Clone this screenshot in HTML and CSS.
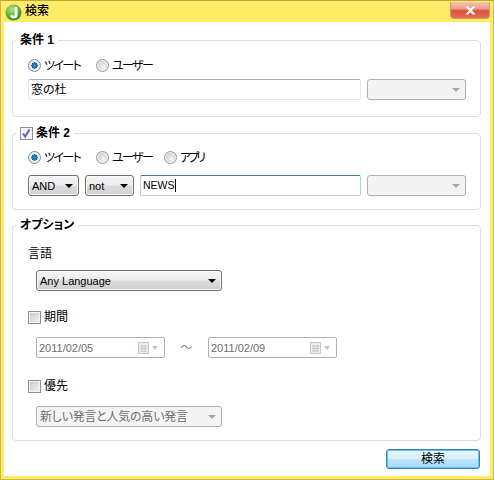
FILE: index.html
```html
<!DOCTYPE html>
<html lang="ja">
<head>
<meta charset="utf-8">
<title>検索</title>
<link rel="stylesheet" href="styles.css">
</head>
<body>
<div class="window">
  <div class="titlebar">
    <svg class="app-icon" width="17" height="17" viewBox="0 0 17 17">
      <defs><radialGradient id="g" cx="40%" cy="30%" r="75%"><stop offset="0" stop-color="#b5e08a"/><stop offset="0.6" stop-color="#5fae3c"/><stop offset="1" stop-color="#2f7d25"/></radialGradient></defs>
      <circle cx="8.5" cy="8.5" r="8" fill="url(#g)"/>
      <path d="M9.5 3h3v8.5c0 2-1.500 3-3.500 3c-2 0-3.500-1-4-2.500l2.200-1.200c.3.700 .8 1 1.300 1c.6 0 1-.4 1-1z" fill="#f4f8ec"/>
    </svg>
    <span class="title">検索</span>
    <div class="close">
      <svg width="13" height="11" viewBox="0 0 13 11"><path d="M1.500 1.500h2.600l2.400 2.200l2.400-2.200h2.600l-3.500 4l3.500 4h-2.600l-2.400-2.200l-2.400 2.200h-2.600l3.500-4z" fill="#fff"/></svg>
    </div>
  </div>
  <div class="content">
    <fieldset class="group first">
      <legend class="legend">条件 1</legend>
      <div class="radios r1">
        <span class="radio on"></span><span class="radio-label">ツイート</span>
        <span class="radio"></span><span class="radio-label">ユーザー</span>
      </div>
      <div class="row r2">
        <div class="input wide">窓の杜</div>
        <div class="select off combo"><span></span><i class="arrow"></i></div>
      </div>
    </fieldset>
    <fieldset class="group second">
      <legend class="legend">
        <span class="check on">
          <svg width="11" height="11" viewBox="0 0 11 11"><path d="M2 5.500l2.200 3l4.300-7" fill="none" stroke="#5566b8" stroke-width="2"/></svg>
        </span>条件 2
      </legend>
      <div class="radios">
        <span class="radio on"></span><span class="radio-label">ツイート</span>
        <span class="radio"></span><span class="radio-label">ユーザー</span>
        <span class="radio"></span><span class="radio-label app">アプリ</span>
      </div>
      <div class="row r3">
        <div class="select and"><span>AND</span><i class="arrow"></i></div>
        <div class="select not"><span>not</span><i class="arrow"></i></div>
        <div class="input focus"><span class="caret">NEWS</span></div>
        <div class="select off combo"><span></span><i class="arrow"></i></div>
      </div>
    </fieldset>
    <fieldset class="group third">
      <legend class="legend">オプション</legend>
      <div class="plain lang-label">言語</div>
      <div class="select indent lang"><span>Any Language</span><i class="arrow"></i></div>
      <div class="check-row period"><span class="check"></span>期間</div>
      <div class="dates">
        <div class="date"><span>2011/02/05</span>
          <svg class="cal" width="11" height="12" viewBox="0 0 11 12"><rect x="0.500" y="0.500" width="10" height="11" fill="#eceff2" stroke="#c4c8cc"/><path d="M2 4h7M2 6.500h7M2 9h7M4 3v7M7 3v7" stroke="#c5cacf"/></svg>
          <i class="arrow"></i></div>
        <span class="tilde">～</span>
        <div class="date"><span>2011/02/09</span>
          <svg class="cal" width="11" height="12" viewBox="0 0 11 12"><rect x="0.500" y="0.500" width="10" height="11" fill="#eceff2" stroke="#c4c8cc"/><path d="M2 4h7M2 6.500h7M2 9h7M4 3v7M7 3v7" stroke="#c5cacf"/></svg>
          <i class="arrow"></i></div>
      </div>
      <div class="check-row priority"><span class="check"></span>優先</div>
      <div class="select off indent lang pri"><span>新しい発言と人気の高い発言</span><i class="arrow"></i></div>
    </fieldset>
    <div class="actions"><div class="button">検索</div></div>
  </div>
</div>
</body>
</html>
```
FILE: styles.css
```css
* { box-sizing: border-box; }
html, body { margin: 0; padding: 0; }
body {
  width: 494px;
  height: 480px;
  overflow: hidden;
  background: #fff;
  font: 12px/14px "Liberation Sans", "Noto Sans CJK JP", sans-serif;
  font-feature-settings: "palt";
  color: #000;
}
.window {
  width: 494px;
  height: 480px;
  background: #ffeb66;
  border: 1px solid #c9b94e;
  border-top-color: #b8a93f;
  padding: 0 3px 3px;
  display: flex;
  flex-direction: column;
}
.titlebar {
  height: 21px;
  flex: none;
  display: flex;
  align-items: flex-start;
  margin: 0 -1px 0 -1px;
  padding-left: 2px;
}
.app-icon { margin-top: 3px; flex: none; }
.title { margin: 2px 0 0 3px; font-size: 12px; font-weight: 500; line-height: 16px; }
.close {
  margin: 1px 1px 0 auto;
  width: 40px;
  height: 17px;
  border: 1px solid #c2a85e;
  border-top: 0;
  border-radius: 0 0 4px 4px;
  background: linear-gradient(#f7c3b2 0, #eea18f 40%, #e0503f 55%, #e56a58 100%);
  display: flex;
  align-items: center;
  justify-content: center;
}
.content {
  flex: 1;
  background: #fff;
  padding: 11px 9px 0 8px;
  display: flex;
  flex-direction: column;
}
.group {
  margin: 0;
  min-width: 0;
  border: 1px solid #d6e0e6;
  border-radius: 4px;
  padding: 0 0 0 15px;
}
.legend {
  margin-left: -12px;
  padding: 0 4px;
  font-weight: 700;
  line-height: 15px;
  height: 15px;
  display: flex;
  align-items: center;
}
.first { padding-bottom: 16px; }
.second { margin-top: 9px; padding-bottom: 13px; }
.third { margin-top: 8px; padding-bottom: 13px; }
.radios { display: flex; align-items: center; height: 13px; margin-top: 10px; }
.r1 { margin-top: 11px; }
.radio {
  width: 13px;
  height: 13px;
  flex: none;
  border-radius: 50%;
  border: 1px solid #9a9a9a;
  background: radial-gradient(circle at 60% 65%, #f4f4f4 0, #dcdcdc 45%, #c2c2c2 100%);
  box-shadow: inset 0 0 0 1px #f2f2f2;
}
.radio.on { background: radial-gradient(circle, #2fa0e0 0, #0b5d9d 38%, #f0f0f0 42%, #e6e6e6 100%); border-color: #7d8b98; }
.radio-label { margin-left: 3px; width: 52px; flex: none; letter-spacing: -1.600px; }
.radio-label.app { letter-spacing: -3px; }
.row { display: flex; }
.r2 { margin-top: 7px; }
.r3 { margin-top: 11px; }
.input {
  height: 21px;
  border: 1px solid #e3e9ef;
  border-top-color: #ababab;
  border-radius: 2px;
  padding: 3px 2px 0;
  background: #fff;
  line-height: 15px;
  flex: none;
}
.wide { width: 333px; }
.focus {
  width: 221px;
  margin-left: 6px;
  border-color: #b5cfe7;
  border-top-color: #3d7bad;
  font-size: 10.500px;
}
.caret { border-right: 1px solid #000; display: inline-block; height: 13px; line-height: 13px; vertical-align: top; }
.select {
  height: 21px;
  flex: none;
  border: 1px solid #707070;
  border-radius: 3px;
  background: linear-gradient(#f4f4f4 0, #ececec 48%, #dcdcdc 52%, #cfcfcf 100%);
  box-shadow: inset 0 0 0 1px #f8f8f8;
  display: flex;
  align-items: center;
  justify-content: space-between;
  padding: 0 5px 0 3px;
  font-size: 11px;
}
.arrow {
  width: 0;
  height: 0;
  flex: none;
  border-left: 4px solid transparent;
  border-right: 4px solid transparent;
  border-top: 4px solid #000;
  margin-top: 1px;
}
.select.off {
  background: #f4f4f4;
  border-color: #b0b0b0;
  box-shadow: none;
  color: #6d6d6d;
  font-size: 12px;
  letter-spacing: -0.250px;
}
.select.off .arrow { border-top-color: #a6a6a6; }
.combo { width: 99px; margin-left: 6px; }
.and { width: 51px; }
.not { width: 49px; margin-left: 6px; }
.plain { line-height: 14px; }
.lang-label { margin-top: 14px; }
.indent { margin-left: 8px; }
.lang { width: 186px; margin-top: 9px; }
.check-row { display: flex; align-items: center; height: 14px; }
.period { margin-top: 19px; }
.priority { margin-top: 21px; }
.pri { margin-top: 13px; }
.check {
  width: 13px;
  height: 13px;
  flex: none;
  margin-right: 3px;
  border: 1px solid #8e8f8f;
  background: linear-gradient(135deg, #c8c8c8, #f4f4f4);
  box-shadow: inset 0 0 0 1px #f4f4f4;
  display: flex;
  align-items: center;
  justify-content: center;
}
.check.on { background: #f2f2f6; }
.dates { display: flex; align-items: center; margin: 13px 0 0 8px; }
.date {
  width: 129px;
  height: 21px;
  flex: none;
  border: 1px solid #b0b0b0;
  border-radius: 2px;
  background: #fff;
  color: #6d6d6d;
  display: flex;
  align-items: center;
  padding: 0 6px 0 2px;
  font-size: 11px;
}
.date span { flex: 1; }
.date .arrow { border-top-color: #c4c4c4; margin-left: 3px; border-left-width: 3.500px; border-right-width: 3.500px; }
.tilde { width: 43px; text-align: center; color: #8a8a8a; font-size: 12px; flex: none; }
.actions { display: flex; justify-content: flex-end; margin: 8px 1px 0 0; }
.button {
  width: 94px;
  height: 20px;
  border: 1px solid #3c7fb1;
  border-radius: 3px;
  background: linear-gradient(#eaf6fd 0, #d9f0fc 50%, #bee6fd 50%, #a7d9f5 100%);
  box-shadow: inset 0 0 0 1px #58c8f0;
  text-align: center;
  line-height: 18px;
}
```
